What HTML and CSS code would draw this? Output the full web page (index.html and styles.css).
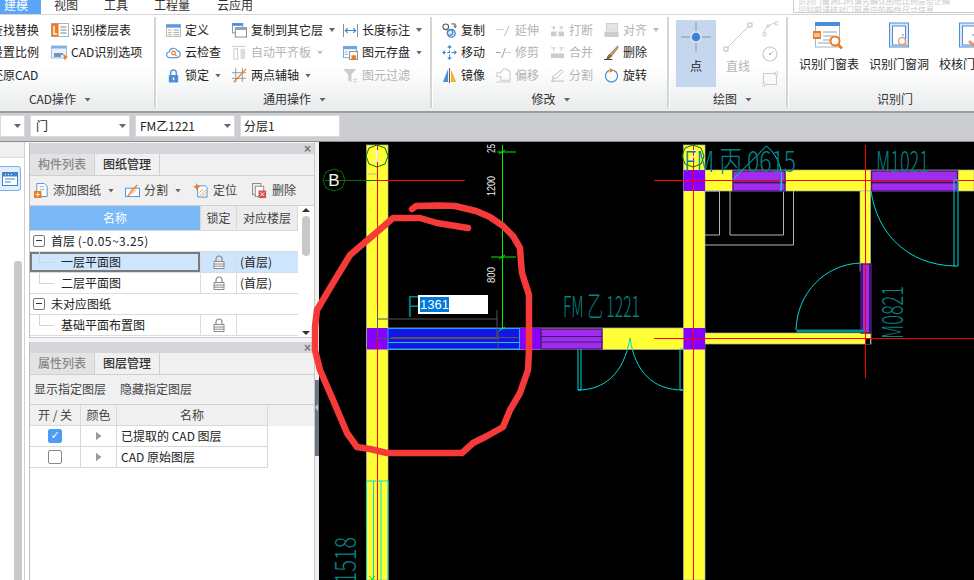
FILE: index.html
```html
<!DOCTYPE html>
<html lang="zh">
<head>
<meta charset="utf-8">
<title>建模</title>
<link rel="stylesheet" href="styles.css">
</head>
<body>
<div class="app">
  <nav class="menu">
    <span class="menu-item active">建模</span>
    <span class="menu-item w-view">视图</span>
    <span class="menu-item w-tool">工具</span>
    <span class="menu-item w-qty">工程量</span>
    <span class="menu-item">云应用</span>
  </nav>
  <div class="hint"><span>识别门窗洞口时请先确认图纸比例是否正确</span><span>识别前请核对门窗表中的构件尺寸信息</span></div>

  <section class="ribbon">
    <div class="group g1">
      <div class="tools c1">
        <div class="tool">查找替换</div>
        <div class="tool">设置比例</div>
        <div class="tool">还原CAD</div>
        <div class="tool wide"><svg class="ic18" viewBox="0 0 18 16"><rect x=".5" y="1.5" width="17" height="13" fill="#fff" stroke="#9fb6d2"/><rect x=".5" y="1.5" width="7" height="13" fill="#ee7a22"/><path d="M3 4v8h3" fill="none" stroke="#fff" stroke-width="1.4"/><path d="M9.500 5h6M9.500 8h6M9.500 11h6" stroke="#7a8694"/></svg>识别楼层表</div>
        <div class="tool wide"><svg class="ic18" viewBox="0 0 18 16"><rect x=".5" y="1" width="15" height="12" fill="#e9f0f8" stroke="#9fbbe0"/><rect x=".5" y="1" width="15" height="2.500" fill="#7fb0e6"/><path d="M3 9h9M3 11h7" stroke="#6e93c4" stroke-width="2"/><path d="M12 9l5 3-2 1-1 3z" fill="#ee7a22"/></svg>CAD识别选项</div>
      </div>
      <div class="group-label">CAD操作<i class="caret"></i></div>
    </div>

    <div class="group g2">
      <div class="tools c2">
        <div class="tool"><svg class="ic" viewBox="0 0 16 16"><rect x=".5" y="1.500" width="15" height="13" fill="#fff" stroke="#a9bcd2"/><rect x=".5" y="1.500" width="15" height="3.500" fill="#5b9bdc"/><path d="M2 7.500h4M2 10h4M2 12.500h4" stroke="#ee9a4a"/><path d="M8 7.500h6M8 10h6M8 12.500h6" stroke="#9aa4ae"/></svg>定义</div>
        <div class="tool"><svg class="ic" viewBox="0 0 16 16"><path d="M4 13.500a3 3 0 0 1-.5-6 4.500 4.500 0 0 1 8.500-1.500 3.800 3.800 0 0 1 0 7.500z" fill="#fff" stroke="#5b9bdc" stroke-width="1.200"/><circle cx="8" cy="8.500" r="2" fill="none" stroke="#ee7a22" stroke-width="1.200"/><path d="M9.500 10l2 2" stroke="#ee7a22" stroke-width="1.200"/></svg>云检查</div>
        <div class="tool"><svg class="ic" viewBox="0 0 16 16"><path d="M5 8V5a3 3 0 0 1 6 0v3" fill="none" stroke="#5b9bdc" stroke-width="1.600"/><rect x="3" y="7.500" width="10" height="8" rx="1" fill="#4a8fd8"/><rect x="7.300" y="10" width="1.400" height="3" fill="#fff"/></svg>锁定<i class="caret"></i></div>
        <div class="tool"><svg class="ic" viewBox="0 0 16 16"><rect x=".5" y=".5" width="11" height="10" fill="#fff" stroke="#5b9bdc"/><rect x=".5" y=".5" width="11" height="2.500" fill="#4a8fd8"/><rect x="3.500" y="5" width="12" height="10" fill="#fff" stroke="#7c8690"/><rect x="3.500" y="5" width="12" height="2.500" fill="#98a2ac"/></svg>复制到其它层<i class="caret"></i></div>
        <div class="tool off"><svg class="ic" viewBox="0 0 16 16"><path d="M0 1.500h15" stroke="#ccc"/><rect x="2" y="4" width="4" height="11" fill="#fff" stroke="#ccc"/><rect x="9" y="4" width="5" height="11" fill="#ddd"/></svg>自动平齐板<i class="caret light"></i></div>
        <div class="tool"><svg class="ic" viewBox="0 0 16 16"><path d="M0 5h15M0 11h15M4 0v15M11 0v15" stroke="#8d959d"/><path d="M2 15L15 1" stroke="#ee7a22" stroke-width="1.300"/></svg>两点辅轴<i class="caret"></i></div>
        <div class="tool"><svg class="ic" viewBox="0 0 16 16"><path d="M.5 1v14M15.500 1v14" stroke="#7c8690"/><path d="M3 8h10M5 5.500L2.500 8 5 10.500M11 5.500L13.500 8 11 10.500" fill="none" stroke="#3f83cc" stroke-width="1.200"/></svg>长度标注<i class="caret"></i></div>
        <div class="tool"><svg class="ic" viewBox="0 0 16 16"><rect x=".5" y="1.500" width="14" height="12" fill="#fff" stroke="#6ea5de"/><rect x=".5" y="1.500" width="14" height="3" fill="#6ea5de"/><rect x="7" y="7" width="8.500" height="8.500" fill="#fff" stroke="#888"/><rect x="9" y="11" width="5" height="4.500" fill="#ee7a22"/><path d="M2 7.500h3M2 10h3" stroke="#6ea5de"/></svg>图元存盘<i class="caret"></i></div>
        <div class="tool off"><svg class="ic" viewBox="0 0 16 16"><path d="M0 1h14L9 7v8L5.500 13V7z" fill="#ccc"/><path d="M11 12h4M11 14.500h4" stroke="#ccc"/></svg>图元过滤</div>
      </div>
      <div class="group-label">通用操作<i class="caret"></i></div>
    </div>

    <div class="group g3">
      <div class="tools c3">
        <div class="tool"><svg class="ic" viewBox="0 0 16 16"><circle cx="4" cy="4" r="3" fill="#fff" stroke="#555" stroke-width="1.200"/><circle cx="10" cy="11" r="4.200" fill="#d8e8f8" stroke="#3f83cc" stroke-width="1.200"/><circle cx="8.500" cy="10" r="3" fill="none" stroke="#3f83cc" stroke-width="1.200"/><path d="M10 1h4v3M12.500 3L14 5 15.500 3" fill="none" stroke="#444"/></svg>复制</div>
        <div class="tool"><svg class="ic" viewBox="0 0 16 16"><path d="M8 1v14M1 8h14" stroke="#3f83cc" stroke-dasharray="3 1.500"/><path d="M8 0l2.500 3h-5zM8 16l2.500-3h-5zM0 8l3-2.500v5zM16 8l-3-2.500v5z" fill="#3f83cc"/></svg>移动</div>
        <div class="tool"><svg class="ic" viewBox="0 0 16 16"><path d="M6.500 1v14H1z" fill="#4a8fd8"/><path d="M9.500 1v14H15z" fill="#f5b324"/><path d="M8 0v16" stroke="#555"/></svg>镜像</div>
        <div class="tool off"><svg class="ic" viewBox="0 0 16 16"><path d="M0 7h8" stroke="#bbb" stroke-dasharray="2 1"/><path d="M9 14l5-11" stroke="#bbb"/></svg>延伸</div>
        <div class="tool off"><svg class="ic" viewBox="0 0 16 16"><path d="M0 8h5" stroke="#999"/><path d="M6 14l4-11" stroke="#999"/><path d="M10 8h6" stroke="#bbb" stroke-dasharray="2 1"/></svg>修剪</div>
        <div class="tool off"><svg class="ic" viewBox="0 0 16 16"><path d="M8 1h3l4 3v9H5V9H1V5h4z" fill="none" stroke="#ccc" stroke-width="1.200"/><path d="M0 15h16" stroke="#ccc"/></svg>偏移</div>
        <div class="tool off"><svg class="ic" viewBox="0 0 16 16"><path d="M1 9h6v5H1zM9 9h6v5H9z" fill="#ccc"/><path d="M4 3v4M12 3v4" stroke="#bbb"/><path d="M2 4l2 2 2-2M10 4l2 2 2-2" fill="none" stroke="#ccc"/></svg>打断</div>
        <div class="tool off"><svg class="ic" viewBox="0 0 16 16"><path d="M1 9h14v5H1z" fill="#ccc"/><path d="M4 3v4M12 3v4M1 3h5M10 3h5" stroke="#ccc"/></svg>合并</div>
        <div class="tool off"><svg class="ic" viewBox="0 0 16 16"><path d="M1 14h14M3 14V9l9-7 2 2-7 7H3" fill="none" stroke="#bbb"/></svg>分割</div>
        <div class="tool off"><svg class="ic" viewBox="0 0 16 16"><rect x="2.500" y=".5" width="12" height="7" fill="#e4e4e4" stroke="#ccc"/><rect x=".5" y="9" width="15" height="6" fill="#ccc"/></svg>对齐<i class="caret light"></i></div>
        <div class="tool"><svg class="ic" viewBox="0 0 16 16"><path d="M14.500 1L6 10l2 2 7-9z" fill="#c9a06c" stroke="#74583a" stroke-width=".7"/><path d="M6 9.500l2.500 2.500-3 3H2c1.500-1 1-4 4-5.500z" fill="#8c6a44"/><path d="M0 15.500h9" stroke="#333"/></svg>删除</div>
        <div class="tool"><svg class="ic" viewBox="0 0 16 16"><path d="M5.500 2.500a6.500 6.500 0 1 0 5 0" fill="none" stroke="#4a8fd8" stroke-width="1.300"/><path d="M6 0l5 2.500L6 5z" fill="#ee7a22"/></svg>旋转</div>
      </div>
      <div class="group-label">修改<i class="caret"></i></div>
    </div>

    <div class="group g4">
      <div class="draw">
        <div class="big point"><svg class="ic-point" viewBox="0 0 30 30"><path d="M15 0v30M0 15h30" stroke="#8d959d"/><circle cx="15" cy="15" r="5" fill="#3f83d8" stroke="#dbe8f6" stroke-width="1.500"/></svg>点</div>
        <div class="big off line"><svg class="ic-line" viewBox="0 0 30 30"><path d="M3 27L27 3" stroke="#ccc"/><path d="M1 25h4v4H1zM25 1h4v4h-4z" fill="#fff" stroke="#bbb"/></svg>直线</div>
        <div class="shapes">
          <svg class="ic" viewBox="0 0 16 16"><path d="M2 13C2 7 7 3 14 2" fill="none" stroke="#ccc"/><path d="M1 12h3v3H1zM13 1h3v3h-3zM5 4h2v2H5z" fill="#fff" stroke="#bbb" stroke-width=".7"/></svg>
          <svg class="ic" viewBox="0 0 16 16"><circle cx="8" cy="8" r="7" fill="#fff" stroke="#ccc" stroke-width="1.200"/><path d="M8 8l4-3" stroke="#ccc"/><rect x="7" y="7" width="2" height="2" fill="#bbb"/></svg>
          <svg class="ic" viewBox="0 0 16 16"><rect x="1.500" y="2.500" width="13" height="11" fill="none" stroke="#ccc"/><path d="M0 12h3v3H0zM13 1h3v3h-3z" fill="#fff" stroke="#bbb" stroke-width=".7"/></svg>
        </div>
      </div>
      <div class="group-label">绘图<i class="caret"></i></div>
    </div>

    <div class="group g5">
      <div class="doors">
        <div class="big"><svg class="ic-door" viewBox="0 0 32 28"><rect x="2.500" y="1" width="24" height="24" fill="#fff" stroke="#9fb6d2"/><rect x="2" y="0" width="25" height="4" fill="#4a8fd8"/><rect x="0" y="9" width="8" height="8" fill="#ee7a22"/><path d="M2 11v4M4 11v4M6 11v4" stroke="#fff"/><path d="M10 10h14M10 14h10M10 18h8M5 21h12" stroke="#98a2ac"/><circle cx="22" cy="19" r="4.500" fill="#fff" stroke="#ee7a22" stroke-width="2"/><path d="M25 22.500l4 4" stroke="#ee7a22" stroke-width="2.500"/></svg>识别门窗表</div>
        <div class="big"><svg class="ic-door" viewBox="0 0 32 28"><rect x="6.500" y="1" width="19" height="24" fill="#d9e6f5" stroke="#4a8fd8"/><rect x="9.500" y="4" width="13" height="19" fill="#fff" stroke="#4a8fd8"/><path d="M20 12v2" stroke="#4a8fd8"/><circle cx="19" cy="19" r="3.500" fill="#fff" stroke="#f0a080" stroke-width="1.500"/><path d="M21.500 21.500l3 3" stroke="#f0a080" stroke-width="2"/></svg>识别门窗洞</div>
        <div class="big"><svg class="ic-door" viewBox="0 0 32 28"><rect x="6.500" y="1" width="19" height="24" fill="#d9e6f5" stroke="#4a8fd8"/><rect x="9.500" y="4" width="13" height="19" fill="#fff" stroke="#4a8fd8"/><path d="M20 12v2" stroke="#4a8fd8"/><path d="M16 19l4 4 8-8" fill="none" stroke="#f0906a" stroke-width="2.500"/></svg>校核门窗洞</div>
      </div>
      <div class="group-label">识别门</div>
    </div>
  </section>

  <section class="selects">
    <div class="select s0"><i class="caret"></i></div>
    <div class="select s1">门<i class="caret"></i></div>
    <div class="select s2">FM乙1221<i class="caret"></i></div>
    <div class="select s3">分层1</div>
  </section>

  <main class="work">
    <aside class="rail">
      <div class="rail-top"></div>
      <div class="rail-btn"><svg class="rail-ic" viewBox="0 0 16 14"><rect x=".5" y=".5" width="15" height="13" fill="#fff" stroke="#3f83cc"/><rect x=".5" y=".5" width="15" height="4" fill="#3f83cc"/><path d="M3 2.500h1M6 2.500h1M9 2.500h1" stroke="#fff"/><path d="M3 7h10M3 10h6" stroke="#3f83cc"/></svg></div>
      <div class="rail-scroll"></div>
    </aside>

    <div class="panels">
      <section class="panel p-top">
        <div class="panel-head"><span class="close">×</span></div>
        <div class="tabs"><span class="tab">构件列表</span><span class="tab on">图纸管理</span></div>
        <div class="bar">
          <span class="bar-item a1"><svg class="ic" viewBox="0 0 16 16"><path d="M3 .5h8l3 3v11H3z" fill="#fff" stroke="#4a8fd8"/><path d="M6 4h5M6 7h5" stroke="#9ab"/><rect x="0" y="8.500" width="8" height="7.500" fill="#ee7a22"/><path d="M4 10v4.500M1.800 12.200h4.400" stroke="#fff"/></svg>添加图纸<i class="caret"></i></span>
          <span class="bar-item a2"><svg class="ic" viewBox="0 0 16 16"><rect x=".5" y="5.500" width="15" height="9" fill="#fff" stroke="#4a8fd8"/><path d="M3 14L13 2" stroke="#ee7a22" stroke-width="1.500"/><path d="M5 9l3-3M7 12l5-5" stroke="#ee9a4a"/></svg>分割<i class="caret"></i></span>
          <span class="bar-item a3"><svg class="ic" viewBox="0 0 16 16"><path d="M5 3h8l2 2v10H5z" fill="#fff" stroke="#4a8fd8"/><path d="M7 14L14 7M7 10l4-4M10 14l4-4" stroke="#ee9a4a"/><path d="M4 0l1.200 2.800L8 4 5.200 5.200 4 8 2.800 5.200 0 4l2.800-1.200z" fill="#ee7a22"/></svg>定位</span>
          <span class="bar-item a4"><svg class="ic" viewBox="0 0 16 16"><rect x=".5" y=".5" width="9" height="12" fill="#eee" stroke="#888"/><rect x="3.500" y="3.500" width="9" height="11" fill="#fff" stroke="#888"/><rect x="7" y="8" width="8" height="8" fill="#d94f4f"/><path d="M9 10l4 4M13 10l-4 4" stroke="#fff"/></svg>删除</span>
        </div>
        <div class="table-wrap">
          <div class="table">
            <div class="th-row"><span class="th name">名称</span><span class="th lock">锁定</span><span class="th floor">对应楼层</span></div>
            <div class="tr group-row"><i class="minus"></i><span>首层 <span class="num">(-0.05~3.25)</span></span></div>
            <div class="tr sel"><span class="td name"><i class="branch"></i>一层平面图</span><span class="td lock"><svg class="lk" viewBox="0 0 12 14"><path d="M3 7V4a3 3 0 0 1 6 0v3" fill="none" stroke="#888" stroke-width="1.200"/><path d="M1 6.500h10v7H1zM1 9h10M1 11.200h10" fill="#fff" stroke="#888"/></svg></span><span class="td floor">(首层)</span></div>
            <div class="tr"><span class="td name"><i class="branch"></i>二层平面图</span><span class="td lock"><svg class="lk" viewBox="0 0 12 14"><path d="M3 7V4a3 3 0 0 1 6 0v3" fill="none" stroke="#888" stroke-width="1.200"/><path d="M1 6.500h10v7H1zM1 9h10M1 11.200h10" fill="#fff" stroke="#888"/></svg></span><span class="td floor">(首层)</span></div>
            <div class="tr group-row"><i class="minus"></i>未对应图纸</div>
            <div class="tr"><span class="td name"><i class="branch"></i>基础平面布置图</span><span class="td lock"><svg class="lk" viewBox="0 0 12 14"><path d="M3 7V4a3 3 0 0 1 6 0v3" fill="none" stroke="#888" stroke-width="1.200"/><path d="M1 6.500h10v7H1zM1 9h10M1 11.200h10" fill="#fff" stroke="#888"/></svg></span><span class="td floor"></span></div>
          </div>
          <div class="vscroll"><i class="up"></i><i class="thumb"></i><i class="down"></i></div>
        </div>
      </section>

      <section class="panel p-bottom">
        <div class="panel-head"><span class="close">×</span></div>
        <div class="tabs"><span class="tab">属性列表</span><span class="tab on">图层管理</span></div>
        <div class="bar bar-text"><span>显示指定图层</span><span>隐藏指定图层</span></div>
        <div class="layer-head"><span class="lc c-on">开 / 关</span><span class="lc c-col">颜色</span><span class="lc c-name">名称</span></div>
        <div class="layer-row"><span class="lc c-on"><i class="check on">✓</i></span><span class="lc c-col"><i class="tri"></i></span><span class="lc c-name left">已提取的 CAD 图层</span></div>
        <div class="layer-row"><span class="lc c-on"><i class="check"></i></span><span class="lc c-col"><i class="tri"></i></span><span class="lc c-name left">CAD 原始图层</span></div>
      </section>
    </div>

    <div class="splitter"><i class="split-dark"></i></div>

    <div class="canvas">
      <svg class="cad" viewBox="319 142 655 438">
        <!-- walls -->
        <g class="wall">
          <rect x="366.500" y="145" width="21.500" height="435"/>
          <rect x="683.500" y="145" width="21.500" height="435"/>
          <rect x="388" y="328" width="296" height="21.500"/>
          <rect x="705" y="170" width="269" height="21"/>
          <rect x="860" y="191" width="10.500" height="80"/>
          <rect x="705" y="333" width="166" height="11"/>
        </g>
        <rect x="866" y="339" width="4" height="5"/>
        <!-- room outlines -->
        <path class="grey" d="M705 191h14.500v44H705M730 191v44h53.500v-44M793.500 191v54H705M378 174h-10M870.500 333v11"/>
        <!-- columns -->
        <g class="col">
          <rect x="367" y="328" width="21" height="21.500"/>
          <rect x="683.500" y="170" width="21.500" height="21"/>
          <rect x="683.500" y="328" width="21.500" height="21.500"/>
          <rect x="520" y="328" width="21" height="21.500"/>
        </g>
        <!-- selected window -->
        <rect class="blue" x="388" y="328.500" width="131.500" height="20.500"/>
        <path class="cy" d="M388 342.500h131.500"/>
        <path class="dk-blue" d="M391 337.500h128M498 331v17"/>
        <!-- purple doors -->
        <g class="door">
          <rect x="541" y="329" width="61" height="20"/>
          <rect x="733" y="171" width="52" height="20"/>
          <rect x="871.500" y="171" width="86" height="20"/>
          <rect x="861" y="264" width="10" height="69"/>
        </g>
        <path class="door-line" d="M541 336.500h61M541 342h62"/>
        <path class="door-band" d="M733 182.500h53M871.500 182.500h86M862 264v69M870 264v69"/>
        <!-- red axes -->
        <path class="red" d="M377.500 145v435M693.500 145v435M865.500 145v233M377.500 180.500H465M654 180.500h320M654 338.500h320"/>
        <path class="green-d" d="M325 180.500h52"/>
        <polygon class="green-d" points="334,169 342,172 345,180 342,188 334,191 326,188 323,180 326,172"/>
        <polygon class="green-d" points="377,145 385,148 388,156 385,164 377,167 369,164 366,156 369,148"/>
        <polygon class="green-d" points="693,145 701,148 704,156 701,164 693,167 685,164 682,156 685,148"/>
        <text class="mark" x="334" y="186" text-anchor="middle">B</text>
        <text class="mark" x="377" y="162" text-anchor="middle">1</text>
        <text class="mark" x="693" y="162" text-anchor="middle">2</text>
        <!-- dimensions -->
        <path class="green" d="M502.500 145v184M497 152h19M491 257h25M499 154l6-4M499 259l6-4M499 331l6-4"/>
        <text class="dim" transform="translate(495 196) rotate(-90)" textLength="20" lengthAdjust="spacingAndGlyphs">1200</text>
        <text class="dim" transform="translate(495 283) rotate(-90)" textLength="16" lengthAdjust="spacingAndGlyphs">800</text>
        <text class="dim" transform="translate(495 153) rotate(-90)" textLength="9" lengthAdjust="spacingAndGlyphs">25</text>
        <!-- edit guides -->
        <path class="guide" d="M377.500 310v29M377.500 319H497M497 310v29M377.500 338.500H497"/>
        <!-- cyan door symbols -->
        <path class="cy" d="M732.500 180l34-34c12 10 18 26 14 45M781 180v11M871 191c6 42 36 74 84 75M954 180h4v86h-4zM861 263c-36 1-64 30-65 67M578 349v41h3v-41M578 390c26 0 46-16 52-52M683 390h-3v-41h3M683 390c-30 0-48-18-53-52M366.500 481H388M373.500 481v99M381 481v99M366.500 481v99M388 481v99"/>
        <path class="teal-l" d="M796.500 331h68.500"/>
        <path class="green" d="M369 576l3 3 3-3M372 579v1"/>
        <!-- labels -->
        <text class="lab" x="563" y="317" textLength="77" lengthAdjust="spacingAndGlyphs">FM 乙 1221</text>
        <text class="lab" x="684" y="172" textLength="112" lengthAdjust="spacingAndGlyphs">FM 丙 0615</text>
        <text class="lab" x="876" y="172" textLength="53" lengthAdjust="spacingAndGlyphs">M1021</text>
        <text class="lab" transform="translate(903 339) rotate(-90)" textLength="53" lengthAdjust="spacingAndGlyphs">M0821</text>
        <text class="lab" transform="translate(356 597) rotate(-90)" textLength="60" lengthAdjust="spacingAndGlyphs">C1518</text>
        <text class="lab" x="406" y="317">F</text>
      </svg>
      <div class="edit"><span class="edit-sel">1361</span></div>
    </div>
  </main>

  <svg class="ink-layer" viewBox="0 0 974 580">
    <polyline class="ink" points="412,209 416,206 440,205.500 455,206 476,211 490,217 503,226 513,236 520,248 521,262 522,273 529,295 529,327 529,350 528,370 520,393 510,410 503,427 487,436 473,443 462,453 387,453 370,449 357,447 347,433 333,400 320,370 315,350 315,327 317,310 333,283 350,255 377,232 393,218 420,218 437,223 468,228"/>
  </svg>
</div>
</body>
</html>
```

FILE: styles.css
```css
* { box-sizing: border-box; }
html, body { margin: 0; height: 100%; overflow: hidden; background: #fff; }
body { font: 12px/1.2 "Noto Sans CJK SC", "Liberation Sans", sans-serif; color: #222; }
i { font-style: normal; display: block; }
svg { display: block; flex: none; }
.app { width: 974px; height: 580px; display: flex; flex-direction: column; position: relative; overflow: hidden; }

.menu { height: 15px; flex: none; display: flex; overflow: hidden; border-bottom: 1px solid #d6d6d6; background: #fff; }
.menu-item { line-height: 10px; height: 14px; margin-right: 26px; color: #333; white-space: nowrap; }
.menu-item.active { width: 41px; padding-left: 4px; margin-right: 13px; background: #5aa5f5; color: #fff; }
.menu-item.w-qty { margin-right: 27px; }
.hint { position: absolute; left: 793px; top: -5px; width: 190px; height: 18px; border: 1px solid #ccc; background: #fff; color: #c8c8c8; font-size: 8px; line-height: 9px; overflow: hidden; display: flex; flex-direction: column; white-space: nowrap; padding-left: 4px; }

.ribbon { height: 98px; flex: none; display: flex; background: linear-gradient(#fff 55%, #e9ebec); border-bottom: 2px solid #9a9ea3; }
.group { display: flex; flex-direction: column; position: relative; flex: none; padding-top: 4px; }
.group::after { content: ""; position: absolute; right: 0; top: 2px; bottom: 3px; width: 2px; background: #d3d5d7; border-right: 1px solid #fff; }
.g5::after { display: none; }
.g1 { width: 166px; margin-left: -9px; }
.g2 { width: 276px; padding-left: 9px; }
.g3 { width: 237px; padding-left: 9px; }
.g4 { width: 119px; padding-left: 6px; }
.g5 { width: 185px; padding-left: 10px; }
.tools { height: 68px; display: grid; grid-auto-flow: column; grid-template-rows: 22px 23px 23px; }
.c1 { grid-template-columns: 60px 100px; }
.c2 { grid-template-columns: 66px 111px 90px; }
.c3 { grid-template-columns: 54px 54px 54px 60px; }
.tool { display: flex; align-items: center; gap: 4px; white-space: nowrap; }
.tool.wide { gap: 2px; }
.c1 .tool.wide:nth-child(n) { grid-column: 2; }
.off { color: #b4b4b4; }
.ic { width: 15px; height: 15px; }
.ic18 { width: 18px; height: 16px; }
.caret { display: block; flex: none; width: 7px; height: 4px; margin-left: 8px; background: #666; clip-path: polygon(0 0, 100% 0, 50% 100%); }
.caret.light { background: #bbb; }
.tool .caret { margin-left: 2px; width: 6px; }
.bar-item .caret { margin-left: 3px; width: 6px; }
.group-label { height: 21px; display: flex; align-items: center; justify-content: center; color: #333; margin-top: 2px; }
.g1 .group-label { width: 138px; }
.g2 .group-label { width: 260px; justify-content: flex-end; padding-right: 100px; }
.g3 .group-label { width: 218px; }
.g5 .group-label { width: 192px; }

.draw { height: 68px; display: flex; }
.big { display: flex; flex-direction: column; align-items: center; white-space: nowrap; }
.point { width: 40px; height: 67px; margin-top: 1px; background: #c5d7ee; padding-top: 2px; gap: 7px; }
.ic-point { width: 30px; height: 30px; }
.line { width: 40px; margin-left: 2px; padding-top: 3px; gap: 7px; }
.ic-line { width: 30px; height: 30px; }
.shapes { margin-left: 4px; height: 68px; display: flex; flex-direction: column; justify-content: space-between; padding: 2px 0 0; }
.shapes .ic { width: 16px; height: 16px; }
.doors { height: 68px; display: grid; grid-template-columns: 60px 60px 60px; gap: 10px; padding-top: 3px; }
.doors .big { gap: 7px; }
.ic-door { width: 32px; height: 28px; }

.selects { height: 29px; flex: none; display: flex; gap: 5px; background: #cbcdd0; padding-top: 2px; border-bottom: 1px solid #8a8d90; align-items: flex-start; }
.select { height: 22px; background: #fff; border: 1px solid #d9dadc; padding-left: 5px; display: flex; align-items: center; justify-content: space-between; padding-right: 3px; font-size: 12px; }
.s0 { width: 25px; justify-content: flex-end; }
.s1 { width: 100px; }
.s2 { width: 100px; padding-left: 4px; }
.s3 { width: 100px; padding-left: 3px; }
.select .caret { margin: 0; }

.work { flex: 1; display: flex; min-height: 0; }
.rail { width: 25px; flex: none; display: flex; flex-direction: column; border-right: 1px solid #d0d0d0; }
.rail-top { height: 16px; background: #f0f0f0; flex: none; border-bottom: 1px solid #ddd; }
.rail-btn { width: 21px; height: 25px; margin-top: 8px; background: #e3eefb; border: 1px solid #7db0e8; border-left: 0; border-radius: 0 3px 3px 0; display: flex; align-items: center; padding-left: 2px; flex: none; }
.rail-ic { width: 16px; height: 14px; }
.rail-scroll { width: 8px; margin: 70px 0 0 14px; flex: 1; background: #c9c9c9; border-radius: 3px 3px 0 0; }

.panels { width: 286px; margin-left: 4px; flex: none; display: flex; flex-direction: column; gap: 4px; background: #f4f4f4; padding-top: 1px; border-right: 1px solid #c8c8c8; }
.panel { background: #fff; border-left: 1px solid #bfbfbf; display: flex; flex-direction: column; }
.p-top { height: 195px; flex: none; border-bottom: 1px solid #c8c8c8; }
.p-bottom { flex: 1; min-height: 0; }
.panel-head { height: 11px; flex: none; background: #d4d6da; display: flex; justify-content: flex-end; align-items: center; padding-right: 3px; color: #777; }
.close { font: bold 12px/10px "Liberation Sans", sans-serif; }
.tabs { height: 22px; flex: none; display: flex; background: #f0f0f0; border-bottom: 1px solid #cfcfcf; }
.tab { width: 65px; display: flex; align-items: center; justify-content: center; background: #e3e3e3; color: #888; font-weight: 500; border-right: 1px solid #cfcfcf; }
.tab.on { background: #f0f0f0; color: #333; }
.bar { height: 30px; flex: none; background: #f0f0f0; border-bottom: 1px solid #d0d0d0; display: flex; align-items: center; color: #444; }
.bar-item { display: flex; align-items: center; gap: 4px; white-space: nowrap; }
.a1 { margin-left: 4px; width: 91px; }
.a2 { width: 68px; }
.a3 { width: 59px; gap: 5px; }
.a4 { gap: 5px; }
.bar-text { padding-left: 4px; gap: 14px; }

.table-wrap { flex: 1; display: flex; min-height: 0; }
.table { width: 268px; flex: none; }
.th-row { height: 25px; display: flex; background: #ececec; border-bottom: 1px solid #d8d8d8; }
.th { display: flex; align-items: center; justify-content: center; color: #444; border-right: 1px solid #d8d8d8; }
.th.name { background: #7ab8f8; color: #fff; }
.name { width: 171px; flex: none; }
.lock { width: 36px; flex: none; }
.floor { flex: 1; }
.tr { height: 21px; display: flex; border-bottom: 1px solid #dcdcdc; align-items: stretch; line-height: 20px; color: #222; white-space: nowrap; }
.group-row { padding-left: 3px; align-items: center; gap: 6px; }
.num { letter-spacing: .45px; }
.minus { width: 12px; height: 12px; border: 1px solid #777; border-radius: 2px; position: relative; flex: none; }
.minus::after { content: ""; position: absolute; left: 2px; right: 2px; top: 4px; height: 1px; background: #333; }
.td { display: flex; align-items: center; border-right: 1px solid #dcdcdc; }
.td.name { padding-left: 9px; gap: 7px; }
.td.lock { justify-content: center; }
.td.floor { padding-left: 3px; border-right: 0; }
.branch { width: 15px; height: 1px; background: #d4d4d4; flex: none; position: relative; }
.branch::before { content: ""; position: absolute; left: 0; top: -11px; width: 1px; height: 12px; background: #d4d4d4; }
.sel { background: #cde5fd; }
.sel .td.name { box-shadow: inset 0 0 0 2px #7a7a7a; }
.lk { width: 12px; height: 14px; }
.vscroll { flex: 1; background: #fff; position: relative; display: flex; flex-direction: column; align-items: center; padding-top: 2px; }
.up { width: 8px; height: 4px; background: #333; clip-path: polygon(50% 0, 100% 100%, 0 100%); }
.thumb { width: 8px; height: 40px; margin-top: 4px; background: #c8c8c8; border-radius: 4px; }
.down { width: 8px; height: 4px; margin-top: auto; margin-bottom: 2px; background: #333; clip-path: polygon(0 0, 100% 0, 50% 100%); }

.layer-head, .layer-row { display: flex; height: 21px; flex: none; }
.layer-head { background: #f0f0f0; color: #444; }
.lc { display: flex; align-items: center; justify-content: center; border-right: 1px solid #d8d8d8; border-bottom: 1px solid #d8d8d8; flex: none; }
.c-on { width: 51px; }
.c-col { width: 36px; }
.c-name { width: 151px; }
.left { justify-content: flex-start; padding-left: 4px; color: #222; white-space: nowrap; }
.check { width: 14px; height: 14px; border: 1px solid #888; border-radius: 2px; background: #fff; color: #fff; font: bold 11px/12px "DejaVu Sans", sans-serif; text-align: center; }
.check.on { background: #4d9cf6; border-color: #4d9cf6; }
.tri { width: 6px; height: 9px; background: #9a9a9a; clip-path: polygon(0 0, 100% 50%, 0 100%); }

.splitter { width: 4px; flex: none; background: #f0f0f0; display: flex; }
.split-dark { width: 4px; height: 76px; margin-top: 238px; background: #6c7680; padding-top: 24px; }
.split-dark::after { content: ""; display: block; width: 3px; height: 7px; background: #c4c8cc; clip-path: polygon(100% 0, 100% 100%, 0 50%); }

.canvas { flex: 1; background: #000; position: relative; min-width: 0; }
.cad { width: 655px; height: 438px; }
.wall rect { fill: #ffff33; stroke: #b0b0b0; stroke-width: .7; }
.grey { fill: none; stroke: #b4b4b4; }
.col rect { fill: #8a00ff; }
.blue { fill: #1414e6; stroke: #00b4ff; }
.dk-blue { fill: none; stroke: #555; }
.door rect { fill: #a02cf0; stroke: #4d1a80; stroke-width: 1.500; }
.door-line { fill: none; stroke: #42186e; stroke-width: 1; }
.door-band { fill: none; stroke: #42186e; stroke-width: 2; }
.red { fill: none; stroke: #f00; }
.green { fill: none; stroke: #00f000; }
.green-d { fill: none; stroke: #067006; }
.mark { fill: #f2f2f2; font: 17px "Liberation Sans", sans-serif; }
.dim { fill: #eee; font: 11px "Liberation Sans", sans-serif; }
.guide { fill: none; stroke: #555; }
.cy { fill: none; stroke: #00d8d8; }
.teal-l { fill: none; stroke: #008f8f; stroke-width: 3; }
.lab { fill: #008484; font: 200 29px "Noto Sans CJK SC", "Liberation Sans", sans-serif; }
.ink-layer { position: absolute; left: 0; top: 0; width: 974px; height: 580px; pointer-events: none; }
.ink { fill: none; stroke: #f63a3a; stroke-width: 6.500; stroke-linejoin: round; stroke-linecap: round; }
.edit { position: absolute; left: 99px; top: 153px; width: 70px; height: 19px; background: #fff; padding: 2px 0 0 2px; line-height: 15px; font-size: 13px; font-family: "Liberation Sans", sans-serif; }
.edit-sel { display: inline-block; width: 29px; height: 15px; background: #0078d7; color: #fff; text-align: center; }
```
